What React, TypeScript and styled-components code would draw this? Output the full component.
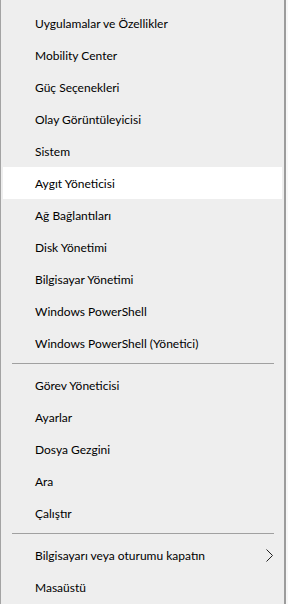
import React from 'react';
import styled, { createGlobalStyle } from 'styled-components';

interface MenuEntry {
  label: string;
  active?: boolean;
  submenu?: boolean;
}

const groups: MenuEntry[][] = [
  [
    { label: 'Uygulamalar ve Özellikler' },
    { label: 'Mobility Center' },
    { label: 'Güç Seçenekleri' },
    { label: 'Olay Görüntüleyicisi' },
    { label: 'Sistem' },
    { label: 'Aygıt Yöneticisi', active: true },
    { label: 'Ağ Bağlantıları' },
    { label: 'Disk Yönetimi' },
    { label: 'Bilgisayar Yönetimi' },
    { label: 'Windows PowerShell' },
    { label: 'Windows PowerShell (Yönetici)' },
  ],
  [
    { label: 'Görev Yöneticisi' },
    { label: 'Ayarlar' },
    { label: 'Dosya Gezgini' },
    { label: 'Ara' },
    { label: 'Çalıştır' },
  ],
  [
    { label: 'Bilgisayarı veya oturumu kapatın', submenu: true },
    { label: 'Masaüstü' },
  ],
];

const App: React.FC = () => {
  return (
    <>
      <GlobalStyle />
      <Screen>
        <Menu>
          {groups.map((group, gi) => (
            <React.Fragment key={gi}>
              {gi > 0 && <Separator />}
              {group.map(item => (
                <MenuItem key={item.label} active={item.active}>
                  <Label>{item.label}</Label>
                  {item.submenu && (
                    <Chevron width="7" height="13" viewBox="0 0 7 13">
                      <path d="M0.5 0.5 L6.5 6.5 L0.5 12.5" fill="none" stroke="#222" strokeWidth="1" />
                    </Chevron>
                  )}
                </MenuItem>
              ))}
            </React.Fragment>
          ))}
        </Menu>
        <Backdrop />
      </Screen>
    </>
  );
};

const GlobalStyle = createGlobalStyle`
  html, body {
    margin: 0;
    padding: 0;
    background: #f4f4f4;
    font-family: 'Lato', 'Noto Sans', sans-serif;
  }
`;

const Screen = styled.div`
  display: flex;
  height: 604px;
  overflow: hidden;
`;

const Menu = styled.div`
  width: 286px;
  flex-shrink: 0;
  box-sizing: border-box;
  background: #eeeeee;
  border-left: 1px solid #a3a3a3;
  border-right: 2px solid #9c9c9c;
  padding: 7px 2px 0 2px;
`;

const MenuItem = styled.div<{ active?: boolean }>`
  display: flex;
  align-items: center;
  height: 32px;
  padding: 0 9px 0 32px;
  background: ${props => (props.active ? '#ffffff' : 'transparent')};
`;

const Label = styled.span`
  font-size: 12px;
  color: #000;
  white-space: nowrap;
  padding-top: 1px;
`;

const Chevron = styled.svg`
  margin-left: auto;
  display: block;
`;

const Separator = styled.div`
  height: 10px;
  padding-top: 4px;
  box-sizing: border-box;

  &::before {
    content: '';
    display: block;
    height: 1px;
    margin: 0 8px 0 9px;
    background: #a0a0a0;
  }
`;

const Backdrop = styled.div`
  flex: 1;
  background: #f7f7f7;
`;

export default App;
